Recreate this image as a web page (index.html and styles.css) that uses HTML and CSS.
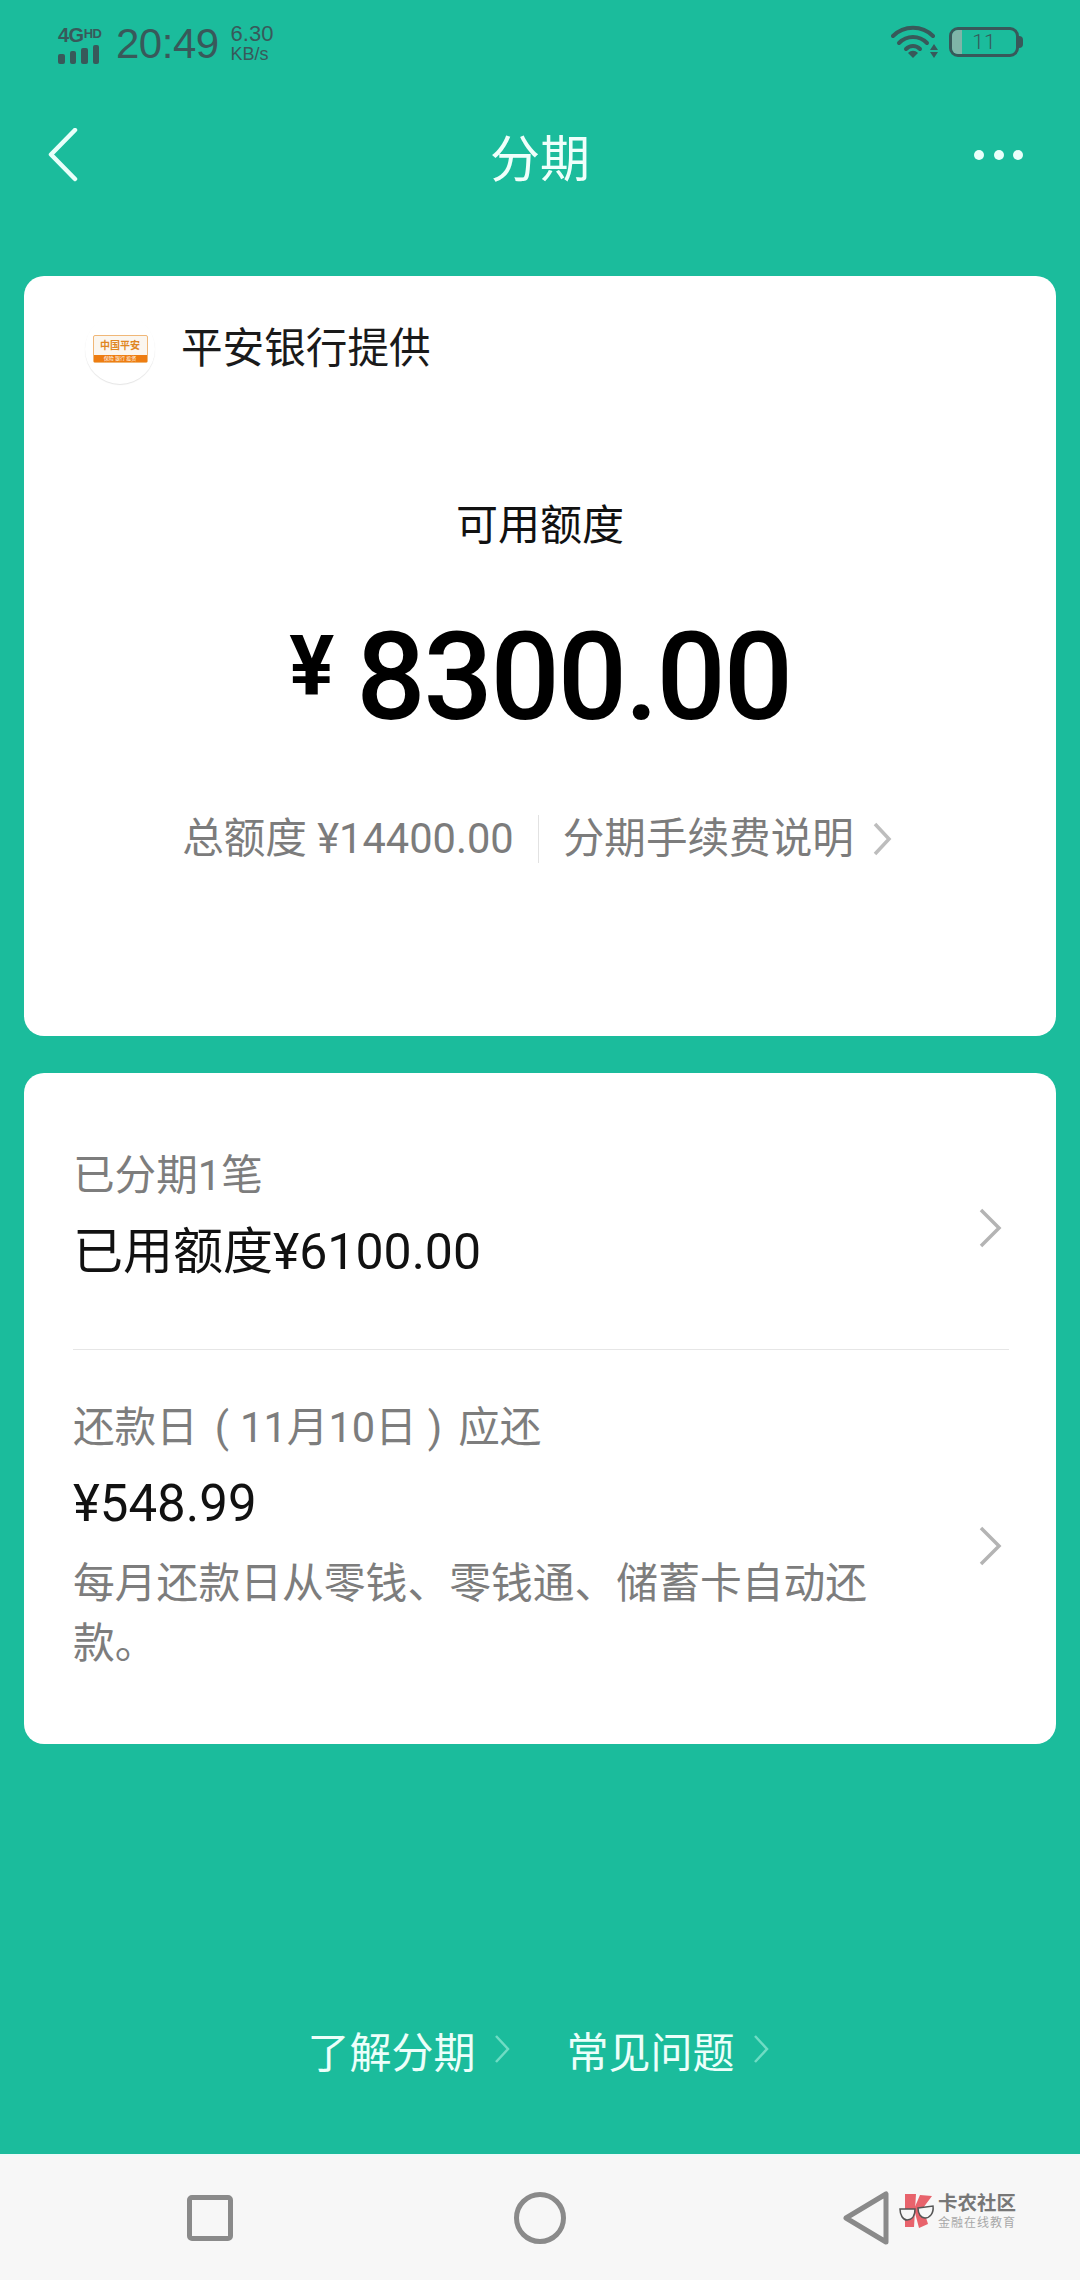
FILE: index.html
```html
<!DOCTYPE html>
<html lang="zh-CN">
    <head>
        <meta charset="UTF-8" />
        <meta name="viewport" content="width=device-width, initial-scale=1.0" />
        <title>分期</title>
        <link rel="stylesheet" href="styles.css">
    </head>
    <body>
        <div class="page">
            <div class="status">
                <div class="status-left">
                    <div class="net">
                        <div class="net-label">4G<span>HD</span></div>
                        <div class="bars"><i></i><i></i><i></i><i></i></div>
                    </div>
                    <span class="clock">20:49</span>
                    <div class="speed"><span>6.30</span><span class="speed-unit">KB/s</span></div>
                </div>
                <div class="status-right">
                    <svg class="wifi" width="48" height="36" viewBox="0 0 48 36">
                        <path d="M2 12 C13 1 31 1 42 12" fill="none" stroke="#38595a" stroke-width="4" stroke-linecap="round"/>
                        <path d="M8 19 C16 11 28 11 36 19" fill="none" stroke="#38595a" stroke-width="4" stroke-linecap="round"/>
                        <path d="M15 25 C19 21 25 21 29 25" fill="none" stroke="#38595a" stroke-width="4" stroke-linecap="round"/>
                        <path d="M17 29 C20 26 24 26 27 29 L22 34 Z" fill="#38595a"/>
                        <path d="M43 20 L47 26 L39 26 Z M39 28 L47 28 L43 34 Z" fill="#38595a"/>
                    </svg>
                    <div class="battery">
                        <div class="battery-body"><i></i><span>11</span></div>
                        <div class="battery-tip"></div>
                    </div>
                </div>
            </div>

            <div class="topbar">
                <svg class="back" width="30" height="54" viewBox="0 0 30 54">
                    <path d="M27 2 L3 26.500 L27 51" fill="none" stroke="#e9fffa" stroke-width="4.500" stroke-linecap="round" stroke-linejoin="round"/>
                </svg>
                <h1 class="title">分期</h1>
                <div class="dots"><i></i><i></i><i></i></div>
            </div>

            <div class="card card-quota">
                <div class="provider">
                    <div class="bank-logo">
                        <div class="bank-box">
                            <span class="bank-name">中国平安</span>
                            <span class="bank-band">保险 银行 投资</span>
                        </div>
                    </div>
                    <span class="provider-name">平安银行提供</span>
                </div>
                <div class="quota-label">可用额度</div>
                <div class="quota-amount"><span class="yen">¥</span>8300.00</div>
                <div class="quota-info">
                    <span>总额度 ¥14400.00</span>
                    <span class="sep"></span>
                    <span>分期手续费说明</span>
                    <svg class="chev" width="20" height="34" viewBox="0 0 20 34">
                        <path d="M3 2 L17 17 L3 32" fill="none" stroke="#bdbdbd" stroke-width="3.500"/>
                    </svg>
                </div>
            </div>

            <div class="card card-detail">
                <div class="row row-used">
                    <div class="row-text">
                        <div class="muted">已分期1笔</div>
                        <div class="strong">已用额度¥6100.00</div>
                    </div>
                    <svg class="chev" width="24" height="40" viewBox="0 0 24 40">
                        <path d="M3 2 L21 20 L3 38" fill="none" stroke="#b4b4b4" stroke-width="3.500"/>
                    </svg>
                </div>
                <div class="row-line"></div>
                <div class="row row-repay">
                    <div class="row-text">
                        <div class="muted">还款日<span class="paren">(</span>11月10日<span class="paren">)</span>应还</div>
                        <div class="strong money">¥548.99</div>
                        <div class="muted note">每月还款日从零钱、零钱通、储蓄卡自动还款。</div>
                    </div>
                    <svg class="chev" width="24" height="40" viewBox="0 0 24 40">
                        <path d="M3 2 L21 20 L3 38" fill="none" stroke="#b4b4b4" stroke-width="3.500"/>
                    </svg>
                </div>
            </div>

            <div class="links">
                <span>了解分期</span>
                <svg class="link-chev" width="16" height="30" viewBox="0 0 16 30">
                    <path d="M2 2 L14 15 L2 28" fill="none" stroke="#6fdcc4" stroke-width="2.500"/>
                </svg>
                <span class="link-second">常见问题</span>
                <svg class="link-chev" width="16" height="30" viewBox="0 0 16 30">
                    <path d="M2 2 L14 15 L2 28" fill="none" stroke="#6fdcc4" stroke-width="2.500"/>
                </svg>
            </div>

            <div class="nav">
                <div class="nav-square"></div>
                <div class="nav-circle"></div>
                <svg width="46" height="54" viewBox="0 0 46 54">
                    <path d="M3 27 L43 3 L43 51 Z" fill="none" stroke="#8a8a8a" stroke-width="5" stroke-linejoin="round"/>
                </svg>
                <div class="mark">
                    <svg width="36" height="36" viewBox="0 0 36 36">
                        <path d="M6 1 L17 1 L15 34 L6 34 Z" fill="#e8636c"/>
                        <path d="M21 2 L33 3 L24 15 L29 31 L20 35 L15 16 Z" fill="#e8636c"/>
                        <path d="M1 16 L16 16 C16 24 12 27 8 27 C4 27 1 22 1 16 Z" fill="#f7f7f7" stroke="#555" stroke-width="1.500"/>
                        <path d="M19 15 L34 13 C35 20 31 25 26 25 C22 25 19 21 19 15 Z" fill="#f7f7f7" stroke="#555" stroke-width="1.500"/>
                    </svg>
                    <div class="mark-text">
                        <span class="mark-name">卡农社区</span>
                        <span class="mark-sub">金融在线教育</span>
                    </div>
                </div>
            </div>
        </div>
    </body>
</html>
```

FILE: styles.css
```css
body {
    margin: 0;
    font-family: Roboto, "Noto Sans CJK SC", sans-serif;
}

.page {
    width: 1080px;
    height: 2280px;
    background: #1bbc9c;
    display: flex;
    flex-direction: column;
    overflow: hidden;
}

/* status bar */
.status {
    height: 88px;
    padding: 0 58px;
    display: flex;
    justify-content: space-between;
    align-items: center;
    color: #38595a;
}
.status-left {
    display: flex;
    align-items: center;
}
.net {
    width: 44px;
    margin-right: 14px;
}
.net-label {
    font-family: "Liberation Sans", sans-serif;
    font-size: 20px;
    font-weight: 700;
    line-height: 18px;
    white-space: nowrap;
    letter-spacing: -0.500px;
}
.net-label span {
    font-size: 13px;
    vertical-align: 4px;
}
.bars {
    display: flex;
    align-items: flex-end;
    gap: 5px;
    margin-top: 1px;
}
.bars i {
    width: 6.500px;
    background: #38595a;
    border-radius: 2px;
}
.bars i:nth-child(1) { height: 10px; }
.bars i:nth-child(2) { height: 13px; }
.bars i:nth-child(3) { height: 16px; }
.bars i:nth-child(4) { height: 19px; }
.clock {
    font-family: "Liberation Sans", sans-serif;
    font-size: 42px;
    letter-spacing: -0.500px;
}
.speed {
    margin-left: 12px;
    display: flex;
    flex-direction: column;
    font-family: "Liberation Sans", sans-serif;
    font-size: 22px;
    line-height: 20px;
}
.speed-unit {
    font-size: 18px;
}
.status-right {
    display: flex;
    align-items: center;
    gap: 10px;
    margin-right: -1px;
    margin-top: -4px;
}
.battery {
    display: flex;
    align-items: center;
}
.battery-body {
    width: 64px;
    height: 24px;
    border: 3px solid #38595a;
    border-radius: 9px;
    position: relative;
    display: flex;
    justify-content: center;
    align-items: center;
    font-size: 21px;
    font-weight: 300;
}
.battery-body i {
    position: absolute;
    left: 0;
    top: 0;
    bottom: 0;
    width: 10px;
    background: #7fb5a8;
    border-radius: 6px 0 0 6px;
}
.battery-tip {
    width: 4px;
    height: 12px;
    background: #38595a;
    border-radius: 0 4px 4px 0;
}

/* title bar */
.topbar {
    height: 134px;
    padding: 0 57px 0 48px;
    margin-bottom: 54px;
    display: flex;
    justify-content: space-between;
    align-items: center;
    position: relative;
}
.title {
    position: absolute;
    left: 0;
    right: 0;
    margin: 0;
    text-align: center;
    color: #f0fffb;
    font-size: 50px;
    font-weight: 400;
}
.dots {
    display: flex;
    gap: 9.500px;
}
.dots i {
    width: 10px;
    height: 10px;
    border-radius: 50%;
    background: #eafffa;
}

/* cards */
.card {
    margin: 0 24px;
    background: #fff;
    border-radius: 20px;
    box-sizing: border-box;
}
.card-quota {
    height: 760px;
    margin-bottom: 37px;
    display: flex;
    flex-direction: column;
    align-items: center;
}
.provider {
    align-self: flex-start;
    margin: 38px 0 0 61px;
    display: flex;
    align-items: center;
    gap: 26px;
}
.bank-logo {
    width: 70px;
    height: 70px;
    border-radius: 50%;
    box-shadow: 0 1px 1px #e4e4e4;
    display: flex;
    align-items: center;
    justify-content: center;
}
.bank-box {
    width: 55px;
    height: 28px;
    display: flex;
    flex-direction: column;
    border: 1px solid #f0b777;
    border-radius: 2px;
    box-sizing: border-box;
    background: #fbf6ef;
}
.bank-name {
    flex: 1;
    font-size: 10px;
    line-height: 19px;
    text-align: center;
    color: #e0861f;
    font-weight: 700;
}
.bank-band {
    height: 7px;
    font-size: 5px;
    line-height: 7px;
    text-align: center;
    color: #fff;
    background: #ee7d11;
}
.provider-name {
    font-size: 41.600px;
    line-height: 60px;
    color: #1a1a1a;
}
.quota-label {
    margin-top: 112px;
    font-size: 42px;
    line-height: 60px;
    color: #111;
}
.quota-amount {
    margin-top: 56px;
    font-size: 122px;
    line-height: 132px;
    font-weight: 500;
    color: #000;
    letter-spacing: -2.200px;
    display: flex;
    align-items: flex-start;
}
.yen {
    font-size: 84px;
    line-height: 110px;
    font-weight: 700;
    letter-spacing: 0;
    margin-right: 22px;
}
.quota-info {
    margin-top: 65px;
    margin-right: 6px;
    display: flex;
    align-items: center;
    font-size: 41.600px;
    line-height: 60px;
    color: #7c7c7c;
}
.sep {
    width: 1px;
    height: 48px;
    background: #e2e2e2;
    margin: 0 24px;
}
.quota-info .chev {
    margin-left: 18px;
}

.row {
    display: flex;
    justify-content: space-between;
    align-items: flex-start;
    padding: 0 54px 0 49px;
    box-sizing: border-box;
}
.row-used {
    height: 276px;
    padding-top: 73px;
}
.row-used .chev {
    margin-top: 62px;
}
.row-line {
    height: 1px;
    margin: 0 47px 0 49px;
    background: #e6e6e6;
}
.row-repay {
    height: 394px;
    padding-top: 48px;
}
.row-repay .chev {
    margin-top: 128px;
}
.row-text {
    width: 810px;
}
.muted {
    font-size: 41.600px;
    line-height: 60px;
    color: #7d7d7d;
}
.paren {
    margin: 0 11px 0 17px;
}
.paren + .paren {
    margin: 0 16px 0 11px;
}
.strong {
    margin-top: 16px;
    font-size: 50px;
    line-height: 60px;
    color: #111;
}
.money {
    font-size: 51px;
}
.note {
    margin-top: 20px;
    font-size: 41.800px;
}

/* bottom links */
.links {
    margin-top: auto;
    margin-bottom: 52px;
    height: 106px;
    padding-right: 4px;
    display: flex;
    justify-content: center;
    align-items: center;
    color: #ecfffa;
    font-size: 42px;
}
.link-chev {
    margin-left: 18px;
}
.link-second {
    margin-left: 57px;
}

/* nav bar */
.nav {
    height: 126px;
    flex-shrink: 0;
    box-sizing: border-box;
    padding: 0 191px 0 187px;
    background: #f7f7f7;
    border-top: 2px solid #edfaf8;
    display: flex;
    justify-content: space-between;
    align-items: center;
    position: relative;
}
.nav-square {
    width: 46px;
    height: 46px;
    box-sizing: border-box;
    border: 5px solid #8a8a8a;
    border-radius: 5px;
}
.nav-circle {
    width: 52px;
    height: 52px;
    margin-left: 4px;
    box-sizing: border-box;
    border: 5px solid #8a8a8a;
    border-radius: 50%;
}
.mark {
    position: absolute;
    left: 899px;
    top: 37px;
    display: flex;
    gap: 3px;
}
.mark-text {
    display: flex;
    flex-direction: column;
    color: #777;
}
.mark-name {
    font-size: 19.500px;
    line-height: 22px;
    font-weight: 700;
}
.mark-sub {
    font-size: 12px;
    line-height: 16px;
    letter-spacing: 1px;
    color: #a8a8a8;
}
```
